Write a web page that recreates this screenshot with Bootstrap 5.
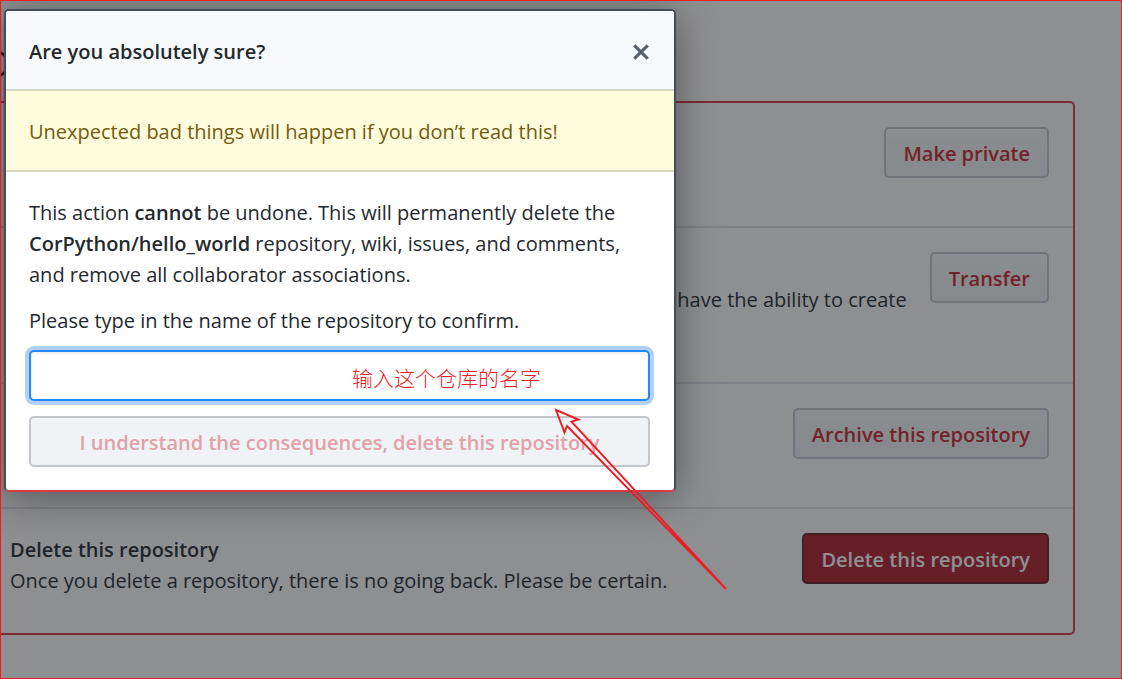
<!DOCTYPE html>
<html lang="en">
<head>
<meta charset="utf-8">
<meta name="viewport" content="width=device-width, initial-scale=1">
<title>Danger Zone</title>
<link rel="stylesheet" href="https://cdn.jsdelivr.net/npm/bootstrap@5.3.0/dist/css/bootstrap.min.css">
<script src="https://cdn.jsdelivr.net/npm/bootstrap@5.3.0/dist/js/bootstrap.bundle.min.js"></script>
<style>
  body {
    font-family: "Open Sans", "Noto Sans CJK SC", sans-serif;
    font-size: 20px;
    line-height: 31px;
    color: #24292e;
    background: #fff;
  }
  .settings-page { min-height: 100vh; margin-left: -15px; padding: 40px 47px 44px 0; }
  .zone-title { font-size: 36px; line-height: 48px; font-weight: 400; margin: 0 0 13px; }
  .danger-zone { border: 2px solid #d73a49; border-radius: 5px; }
  .danger-row { min-height: 123px; padding: 24px 24px 37px 23px; gap: 23px; }
  .danger-row + .danger-row { min-height: 125px; border-top: 2px solid #e1e4e8; }
  .danger-row + .transfer-row { min-height: 156px; }
  .row-text { padding-top: 1px; }
  .transfer-row .row-text { padding-top: 32px; }
  .semi { font-weight: 600; }
  .gh-btn {
    --bs-btn-font-size: 20px;
    --bs-btn-line-height: 31px;
    --bs-btn-font-weight: 600;
    --bs-btn-border-width: 2px;
    --bs-btn-border-radius: 5px;
    --bs-btn-color: #cb2431;
    --bs-btn-border-color: #c5c9cd;
    --bs-btn-disabled-color: #e1a1a8;
    --bs-btn-disabled-bg: #eff3f6;
    --bs-btn-disabled-border-color: #c3c6cb;
    --bs-btn-disabled-opacity: 1;
    padding: 9px 17px 7px;
    height: 51px;
    white-space: nowrap;
  }
  .gh-btn-plain { background-image: linear-gradient(#fafbfc, #eff3f6); }
  .gh-btn-solid { --bs-btn-color: #fff; --bs-btn-bg: #b01e2a; --bs-btn-border-color: #65202a; }
  .shade { background: rgba(27, 31, 35, .5); }
  .confirm-box {
    top: 9px;
    left: 4px;
    width: 672px;
    max-width: calc(100% - 8px);
    background: #fff;
    border: 2px solid #444d56;
    border-bottom-color: #d73a49;
    border-radius: 5px;
    box-shadow: 0 6px 40px rgba(0, 0, 0, .4);
  }
  .confirm-head, .confirm-warning, .confirm-body { padding: 25px 24px 23px 23px; }
  .confirm-head { background: #f6f8fa; border-bottom: 1px solid #d1d5da; border-radius: 3px 3px 0 0; padding-bottom: 22px; }
  .confirm-head h2 { font-size: 20px; line-height: 31px; font-weight: 600; }
  .confirm-warning { background: #fffbdd; color: #735c0f; border: solid #dcd7bd; border-width: 1px 0 2px; }
  .confirm-body p { margin-bottom: 15px; }
  .confirm-label { margin-bottom: 14px; }
  .confirm-field { margin-bottom: 15px; }
  .confirm-input, .confirm-input:focus {
    height: 51px;
    border: 2px solid #2188ff;
    border-radius: 5px;
    font-size: 20px;
    box-shadow: 0 0 0 4px #b1d1f4, inset 0 2px 3px rgba(27, 31, 35, .08);
  }
  .note-text { left: 52%; top: 13px; font-size: 21px; font-weight: 300; color: #ed1c24; pointer-events: none; }
  .note-arrow { left: 550px; top: 404px; pointer-events: none; }
  .note-frame { border: 1px solid #ed1c24; pointer-events: none; }
</style>
</head>
<body>
<div class="position-relative overflow-hidden">
  <main class="settings-page">
    <h1 class="zone-title">Danger Zone</h1>
    <section class="danger-zone">
      <div class="danger-row d-flex justify-content-end align-items-start">
        <button type="button" class="btn gh-btn gh-btn-plain">Make private</button>
      </div>
      <div class="danger-row transfer-row d-flex justify-content-end align-items-start">
        <div class="row-text text-end">have the ability to create</div>
        <button type="button" class="btn gh-btn gh-btn-plain">Transfer</button>
      </div>
      <div class="danger-row d-flex justify-content-end align-items-start">
        <button type="button" class="btn gh-btn gh-btn-plain">Archive this repository</button>
      </div>
      <div class="danger-row d-flex justify-content-between align-items-start">
        <div class="row-text"><div class="semi">Delete this repository</div><div>Once you delete a repository, there is no going back. Please be certain.</div></div>
        <button type="button" class="btn gh-btn gh-btn-solid">Delete this repository</button>
      </div>
    </section>
  </main>

  <div class="shade position-absolute top-0 start-0 w-100 h-100"></div>

  <div class="confirm-box position-absolute" role="dialog" aria-labelledby="confirm-title">
    <div class="confirm-head d-flex justify-content-between align-items-center">
      <h2 id="confirm-title" class="m-0">Are you absolutely sure?</h2>
      <button type="button" class="border-0 bg-transparent p-0 d-flex" aria-label="Close">
        <svg width="18" height="24" viewBox="0 0 12 16" fill="#586069" aria-hidden="true"><path d="M7.48 8l3.75 3.75-1.48 1.48L6 9.48l-3.75 3.75-1.48-1.48L4.52 8 .77 4.25l1.48-1.48L6 6.52l3.75-3.75 1.48 1.48L7.48 8z"/></svg>
      </button>
    </div>
    <div class="confirm-warning">Unexpected bad things will happen if you don’t read this!</div>
    <form class="confirm-body">
      <p>This action <span class="semi">cannot</span> be undone. This will permanently delete the <span class="semi">CorPython/hello_world</span> repository, wiki, issues, and comments, and remove all collaborator associations.</p>
      <label for="repo-name" class="confirm-label d-block">Please type in the name of the repository to confirm.</label>
      <div class="confirm-field position-relative">
        <input id="repo-name" type="text" class="form-control confirm-input" autocomplete="off">
        <span class="note-text position-absolute text-nowrap" lang="zh-CN">输入这个仓库的名字</span>
      </div>
      <button type="submit" class="btn gh-btn d-block w-100" disabled>I understand the consequences, delete this repository</button>
    </form>
  </div>

  <svg class="note-arrow position-absolute" width="182" height="192" viewBox="550 404 182 192" fill="none" stroke="#ed1c24" stroke-width="1.9" stroke-linejoin="miter" aria-hidden="true">
    <path d="M556 410L578.500 419.500 571.500 421.700 726 589 567 426 564.500 432.500Z"/>
  </svg>
  <div class="note-frame position-absolute top-0 start-0 w-100 h-100"></div>
</div>
</body>
</html>
